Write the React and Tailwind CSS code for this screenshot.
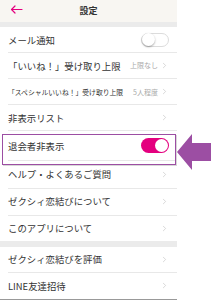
import { ChevronRight } from 'lucide-react'

const font = { fontFamily: '"Noto Sans CJK JP", "Noto Sans", sans-serif' }

function Toggle({ on }) {
  return on ? (
    <div className="w-[28px] h-[15px] shrink-0 rounded-full bg-[#e4007f] flex items-center justify-end pr-[1px]">
      <div className="w-[13px] h-[13px] rounded-full bg-white" />
    </div>
  ) : (
    <div className="w-[28px] h-[14px] shrink-0 rounded-full bg-white border border-[#dcdcdc] flex items-center">
      <div className="w-[13px] h-[13px] rounded-full bg-white shadow-[0_1px_2px_rgba(0,0,0,0.35)]" />
    </div>
  )
}

function Row({ label, small, value, toggle, h = 'h-[27px]', divider = true }) {
  return (
    <div className={`${h} pl-[8px] flex`}>
      <div className={`flex-1 flex items-center pr-[8px] ${divider ? 'border-b border-[#e8e8e8]' : ''}`}>
        <span className={`flex-1 min-w-0 text-[#333] whitespace-nowrap ${small ? 'text-[6.8px]' : 'text-[9.4px]'}`}>{label}</span>
        {value && <span className="shrink-0 whitespace-nowrap text-[7px] text-[#aaa] mr-[2px]">{value}</span>}
        {toggle === undefined ? (
          <ChevronRight size={9} strokeWidth={1.5} className="shrink-0 text-[#bbb]" />
        ) : (
          <Toggle on={toggle} />
        )}
      </div>
    </div>
  )
}

export default function App() {
  return (
    <div className="w-[211px] h-[300px] bg-white flex overflow-hidden relative" style={font}>
      <div className="w-[177px] h-[300px] flex flex-col border-b border-[#999]">
        {/* Header */}
        <div className="h-[22px] shrink-0 bg-[#f8f6f2] flex items-center relative">
          <svg width="13" height="9" viewBox="0 0 13 9" className="absolute left-[10px] top-[5px]">
            <path d="M12 4.5H1.5M5 1L1.5 4.5L5 8" fill="none" stroke="#e4007f" strokeWidth="1.2" strokeLinecap="round" strokeLinejoin="round" />
          </svg>
          <span className="mx-auto text-[9px] font-bold text-[#333]">設定</span>
        </div>
        <div className="h-[5px] shrink-0 bg-[#ebebeb]" />

        <Row label="メール通知" toggle={false} />
        <Row label="「いいね！」受け取り上限" value="上限なし" />
        <Row label="「スペシャルいいね！」受け取り上限" small value="5人程度" />
        <Row label="非表示リスト" />
        <Row label="退会者非表示" toggle={true} h="h-[31px]" />
        <Row label="ヘルプ・よくあるご質問" h="h-[28px]" />
        <Row label="ゼクシィ恋結びについて" h="h-[28px]" />
        <Row label="このアプリについて" h="h-[26px]" divider={false} />
        <div className="h-[6px] shrink-0 bg-[#ebebeb]" />
        <Row label="ゼクシィ恋結びを評価" />
        <Row label="LINE友達招待" divider={false} />
      </div>

      {/* Highlight box */}
      <div className="absolute left-[2px] top-[134px] w-[174px] h-[31px] border-[1.5px] border-[#9c4ea3] shadow-[1px_1px_0_#d8d8d8]" />

      {/* Arrow */}
      <svg width="35" height="36" viewBox="0 0 35 36" className="absolute left-[177px] top-[134px]">
        <path d="M0 18L15 0V9H35V27H15V36Z" fill="#9c4ea3" />
      </svg>
    </div>
  )
}
